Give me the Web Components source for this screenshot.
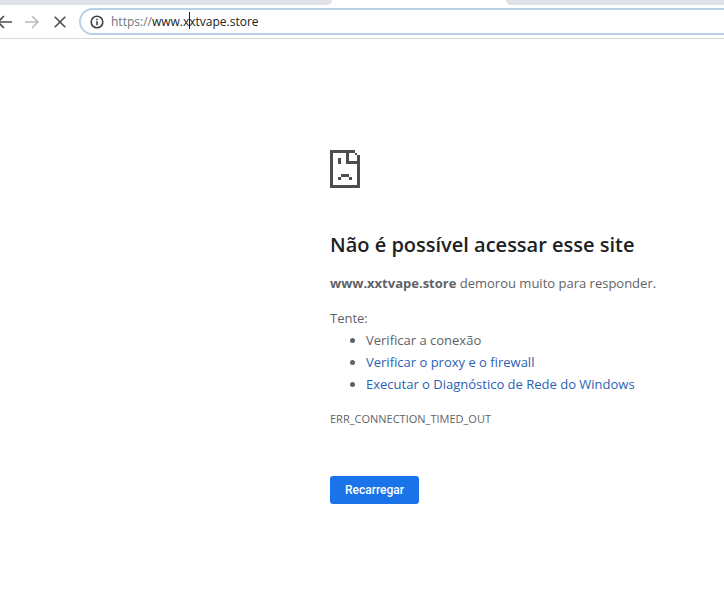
<!DOCTYPE html>
<html lang="pt-BR">
<head>
<meta charset="utf-8">
<meta name="viewport" content="width=device-width, initial-scale=1">
<title>www.xxtvape.store</title>
<style>
  body{
    margin:0;
    background:#fff;
    color:#5f6368;
    font-family:"Open Sans","Noto Sans",sans-serif;
    font-size:13px;
  }
</style>
</head>
<body>
<tab-strip></tab-strip>
<browser-toolbar scheme="https://" address="www.xxtvape.store"></browser-toolbar>
<error-page code="ERR_CONNECTION_TIMED_OUT">
  <span slot="title">Não é possível acessar esse site</span>
  <strong slot="host">www.xxtvape.store</strong>
  <span slot="summary">demorou muito para responder.</span>
  <error-tip>Verificar a conexão</error-tip>
  <error-tip href="#proxy">Verificar o proxy e o firewall</error-tip>
  <error-tip href="#rede">Executar o Diagnóstico de Rede do Windows</error-tip>
  <reload-button slot="action">Recarregar</reload-button>
</error-page>

<script>
class TabStrip extends HTMLElement{
    constructor(){
        super()
        this.attachShadow({mode:'open'});
    }
    connectedCallback(){
        this.shadowRoot.innerHTML=`
          <style>
          :host{
            display:flex;
            height:5px;
          }
          div{
            background:#dee1e6;
          }
          .before{
            flex:0 0 332px;
            border-bottom-right-radius:5px;
          }
          .active{
            flex:0 0 174px;
            background:#fff;
          }
          .after{
            flex:1;
            border-bottom-left-radius:5px;
          }
          </style>
          <div class="before"></div>
          <div class="active"></div>
          <div class="after"></div>
        `;
    }
}

class BrowserToolbar extends HTMLElement{
    constructor(){
        super()
        this.attachShadow({mode:'open'});
    }
    connectedCallback(){
        this.shadowRoot.innerHTML=`
          <style>
          :host{
            display:flex;
            align-items:center;
            height:33px;
            border-bottom:1px solid #d5d7da;
            overflow:hidden;
          }
          button{
            flex:none;
            width:28px;
            height:28px;
            margin:0;
            padding:6px;
            border:0;
            background:none;
            color:#4a4d51;
          }
          button:first-of-type{
            margin-left:-10px;
          }
          button:disabled{
            color:#b8babd;
          }
          svg{
            display:block;
            width:16px;
            height:16px;
            fill:none;
            stroke:currentColor;
            stroke-width:1.6;
          }
          .box{
            flex:1;
            display:flex;
            align-items:center;
            box-sizing:border-box;
            height:27px;
            margin-left:5px;
            margin-right:-20px;
            padding-left:8px;
            border:2px solid #b9cfe6;
            border-radius:14px;
            color:#3c4043;
            font-size:12px;
          }
          .box svg{
            flex:none;
            margin-right:6px;
          }
          label{
            color:#70757a;
          }
          .field{
            flex:1;
            position:relative;
            display:flex;
          }
          input{
            flex:1;
            min-width:0;
            padding:0;
            border:0;
            outline:0;
            background:none;
            color:#202124;
            font:inherit;
          }
          .caret{
            position:absolute;
            left:37px;
            top:-1px;
            width:1px;
            height:17px;
            background:#202124;
          }
          </style>
          <button aria-label="Voltar"><svg viewBox="0 0 16 16"><path d="M17 8H3M8 2L2 8l6 6"/></svg></button>
          <button aria-label="Avançar" disabled><svg viewBox="0 0 16 16"><path d="M1 8h12M8 2l6 6-6 6"/></svg></button>
          <button aria-label="Parar"><svg viewBox="0 0 16 16"><path d="M2.7 2.7l10.6 10.6M13.3 2.7L2.7 13.3"/></svg></button>
          <div class="box">
            <svg viewBox="0 0 16 16"><circle cx="8" cy="8" r="5.8"/><path d="M8 7.3V11.3M8 4.8v1.5"/></svg>
            <label for="url">${this.getAttribute('scheme')}</label>
            <div class="field">
              <input id="url" type="text" spellcheck="false" value="${this.getAttribute('address')}">
              <span class="caret"></span>
            </div>
          </div>
        `;
    }
}

class ErrorTip extends HTMLElement{
    constructor(){
        super()
        this.attachShadow({mode:'open'});
    }
    connectedCallback(){
        const href=this.getAttribute('href');
        this.setAttribute('role','listitem');
        this.shadowRoot.innerHTML=`
          <style>
          :host{
            display:list-item;
            list-style:disc;
            line-height:22px;
          }
          a{
            color:#2b62b5;
            text-decoration:none;
          }
          </style>
          ${href ? `<a href="${href}"><slot></slot></a>` : '<slot></slot>'}
        `;
    }
}

class ReloadButton extends HTMLElement{
    constructor(){
        super()
        this.attachShadow({mode:'open'});
    }
    connectedCallback(){
        this.shadowRoot.innerHTML=`
          <style>
          :host{
            display:inline-block;
          }
          button{
            display:block;
            height:28px;
            margin:0;
            padding:0 15px;
            border:0;
            border-radius:3px;
            background:#1a73e8;
            color:#fff;
            font:500 12px Roboto,"Liberation Sans",sans-serif;
          }
          </style>
          <button type="button"><slot></slot></button>
        `;
    }
}

class ErrorPage extends HTMLElement{
    constructor(){
        super()
        this.attachShadow({mode:'open'});
    }
    connectedCallback(){
        this.shadowRoot.innerHTML=`
          <style>
          :host{
            display:block;
            padding:111px 16px 40px 330px;
            line-height:22px;
          }
          svg{
            display:block;
            width:30px;
            height:38px;
            fill:#4d4d4d;
          }
          h1{
            margin:43px 0 0;
            color:#202124;
            font-size:20px;
            font-weight:600;
            line-height:28px;
          }
          p{
            margin:13px 0 0;
          }
          .tips{
            padding-left:36px;
          }
          .code{
            font-size:11px;
          }
          .action{
            margin-top:46px;
          }
          </style>
          <svg viewBox="0 0 11 14" preserveAspectRatio="none" shape-rendering="crispEdges" aria-hidden="true">
            <path d="M0 0h9v1H7v3h3V2h1v12H0zM1 1v12h9V5H6V1z" fill-rule="evenodd"/>
            <path d="M9 1h1v1H9zM3 3h1v2H3zM4 9h3v1H4zM3 10h1v1H3zM7 10h1v1H7z"/>
          </svg>
          <h1><slot name="title"></slot></h1>
          <p><slot name="host"></slot> <slot name="summary"></slot></p>
          <p>Tente:</p>
          <div class="tips" role="list"><slot></slot></div>
          <p class="code">${this.getAttribute('code')}</p>
          <div class="action"><slot name="action"></slot></div>
        `;
    }
}

customElements.define('tab-strip',TabStrip);
customElements.define('browser-toolbar',BrowserToolbar);
customElements.define('error-tip',ErrorTip);
customElements.define('reload-button',ReloadButton);
customElements.define('error-page',ErrorPage);
</script>
</body>
</html>
